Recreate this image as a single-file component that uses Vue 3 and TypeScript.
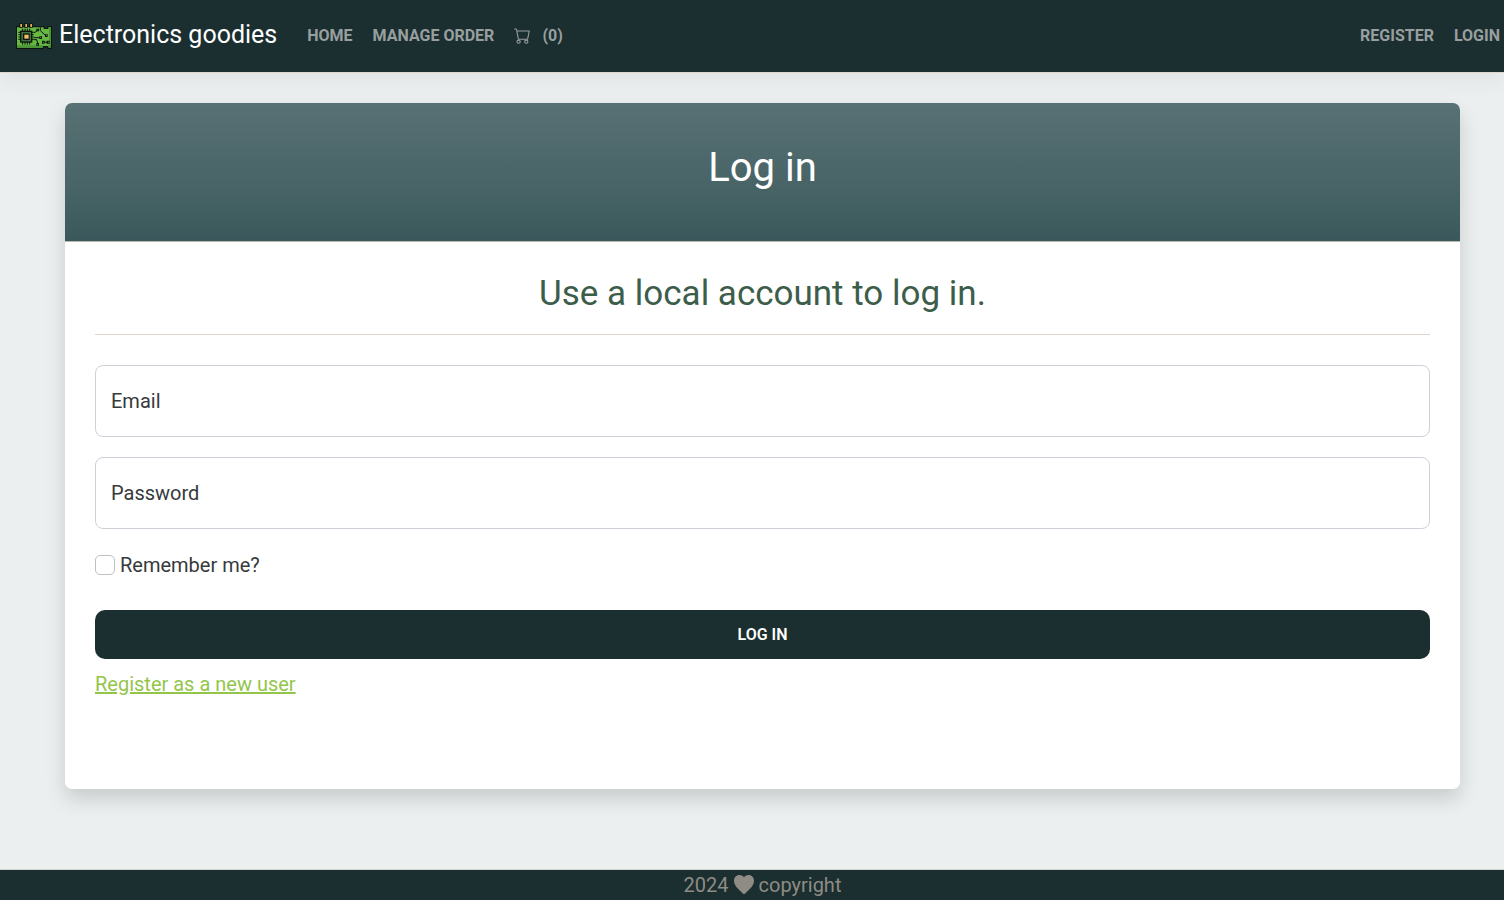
<script setup lang="ts">
import { ref } from 'vue'

const cartCount = ref(0)
const email = ref('')
const password = ref('')
const remember = ref(false)
</script>

<template>
  <div class="page">
    <header class="navbar">
      <a class="brand" href="#">
        <svg class="logo" viewBox="0 0 108 81" aria-hidden="true">
          <path d="M0 13H86V18H94V13H108V81H94V76H83V81H0Z" fill="#0a1510" />
          <path d="M3 16H83V21H97V16H105V76H97V72H80V77H3Z" fill="#67b843" />
          <path d="M3 70H80V77H3ZM97 70H105V77H97ZM99 16H105V70H99Z" fill="#4d963a" />
          <path d="M10 4H20V17H10ZM25 4H35V17H25ZM40 4H50V17H40Z" fill="#0a1510" />
          <path d="M13 6H18V15H13ZM28 6H33V15H28ZM43 6H48V15H43Z" fill="#e5ad55" />
          <path d="M20 20V68M27 20V68M34 20V68M41 20V68M7 31H53M7 38H53M7 45H53M7 52H53" fill="none" stroke="#0a1510" stroke-width="3" />
          <rect x="12" y="26" width="37" height="36" fill="#0a1510" />
          <rect x="16" y="30" width="29" height="28" fill="#3f733b" />
          <rect x="21" y="34" width="20" height="20" fill="#0a1510" />
          <rect x="25" y="38" width="13" height="12" fill="#f4bd63" />
          <path d="M53 31H57L65 25M53 47H71M53 53H62L65 63M73 16V26L88 40" fill="none" stroke="#0a1510" stroke-width="3" />
          <path d="M61 20H69V28H61ZM70 43H78V51H70ZM61 63H69V71H61ZM87 37H95V45H87ZM78 56H86V65H78ZM92 56H101V65H92Z" fill="#0a1510" />
          <path d="M84 59H94V62H84Z" fill="#0a1510" />
          <path d="M64 23H66V25H64ZM64 66H66V68H64ZM81 59H83V62H81ZM96 59H98V62H96Z" fill="#8bd05c" />
          <path d="M73 46H75V48H73ZM90 40H92V42H90Z" fill="#e9b65a" />
        </svg>
        <span>Electronics goodies</span>
      </a>
      <nav class="links" aria-label="Main">
        <a href="#">Home</a>
        <a href="#">Manage Order</a>
        <a class="cart" href="#" aria-label="Cart">
          <svg width="16" height="16" viewBox="0 0 16 16" fill="none" stroke="currentColor" stroke-width="1.1" stroke-linecap="round" stroke-linejoin="round" aria-hidden="true">
            <path d="M.6 1H2.4L4.4 11.2H13.6L15.3 3H2.9" />
            <circle cx="4.6" cy="13.7" r="1.6" />
            <circle cx="12.3" cy="13.7" r="1.6" />
          </svg>
          <span>({{ cartCount }})</span>
        </a>
      </nav>
      <nav class="links account" aria-label="Account">
        <a href="#">Register</a>
        <a href="#">Login</a>
      </nav>
    </header>

    <main class="content">
      <section class="card">
        <header class="card-header">
          <h1>Log in</h1>
        </header>
        <form class="card-body" @submit.prevent>
          <h2>Use a local account to log in.</h2>
          <hr />
          <div class="field">
            <input id="email" v-model="email" type="email" autocomplete="username" />
            <label v-show="!email" for="email">Email</label>
          </div>
          <div class="field">
            <input id="password" v-model="password" type="password" autocomplete="current-password" />
            <label v-show="!password" for="password">Password</label>
          </div>
          <div class="check">
            <input id="remember" v-model="remember" type="checkbox" />
            <label for="remember">Remember me?</label>
          </div>
          <button class="submit" type="submit">Log in</button>
          <a class="register" href="#">Register as a new user</a>
        </form>
      </section>
    </main>

    <footer class="footer">
      <span>2024</span>
      <svg width="20" height="20" viewBox="0 0 20 20" fill="currentColor" aria-hidden="true">
        <path d="M10 2.3C11.2.8 12.9 0 14.6 0 17.7 0 20 2.4 20 5.7 20 8.5 18.6 11.2 16.2 13.6L10.9 18.8Q10 19.6 9.1 18.8L3.8 13.6C1.4 11.2 0 8.5 0 5.7 0 2.4 2.3 0 5.4 0 7.1 0 8.8.8 10 2.3Z" />
      </svg>
      <span>copyright</span>
    </footer>
  </div>
</template>

<style>
body {
  margin: 0;
  background: #ebefef;
}
</style>

<style scoped>
.page {
  display: flex;
  flex-direction: column;
  min-height: 100vh;
  font-family: Roboto, "Liberation Sans", sans-serif;
  font-size: 20px;
  line-height: 30px;
  color: #373a3c;
}

.page *,
.page *::before {
  box-sizing: border-box;
}

.navbar {
  display: flex;
  align-items: center;
  padding: 15px 4px 16px 16px;
  border-bottom: 1px solid #e0d8cc;
  background: #1b2e30;
  box-shadow: 0 8px 20px rgba(0, 0, 0, 0.05);
}

.brand {
  display: flex;
  align-items: center;
  gap: 7px;
  margin-right: 30px;
  color: #fff;
  font-size: 25px;
  line-height: 40px;
  padding-bottom: 1px;
  text-decoration: none;
  white-space: nowrap;
}

.logo {
  width: 36px;
  height: 27px;
}

.links {
  display: flex;
  align-items: center;
  gap: 20px;
}

.links a {
  color: #989f9f;
  font-size: 16px;
  font-weight: 700;
  line-height: 24px;
  text-transform: uppercase;
  text-decoration: none;
  white-space: nowrap;
}

.links .cart {
  display: flex;
  align-items: center;
  gap: 12px;
}

.account {
  margin-left: auto;
}

.content {
  flex: 1;
  padding: 30px 44px 80px 65px;
}

.card {
  border-radius: 7px;
  background: #fff;
  box-shadow: 0 10px 20px rgba(0, 0, 0, 0.15);
}

.card-header {
  padding: 40px 30px 48px;
  border-bottom: 1px solid #b5b8ad;
  border-radius: 7px 7px 0 0;
  background: linear-gradient(180deg, #587174, #486466 60%, #3a585b);
  color: #fff;
  text-align: center;
}

h1 {
  margin: 0;
  font-size: 40px;
  font-weight: 400;
  line-height: 50px;
}

.card-body {
  display: flex;
  flex-direction: column;
  padding: 30px 30px 90px;
}

h2 {
  margin: 0;
  color: #3d5d4b;
  font-size: 35px;
  font-weight: 400;
  line-height: 44px;
  text-align: center;
}

hr {
  width: 100%;
  margin: 18px 0 30px;
  border: 0;
  border-top: 1px solid #dfd7ce;
}

.field {
  display: grid;
  margin-bottom: 20px;
}

.field input,
.field label {
  grid-area: 1 / 1;
}

.field input {
  width: 100%;
  height: 72px;
  padding: 20px 15px;
  border: 1px solid #ced1d8;
  border-radius: 8px;
  background: #fff;
  color: inherit;
  font: inherit;
}

.field label {
  align-self: center;
  justify-self: start;
  margin-left: 16px;
}

.check {
  display: flex;
  align-items: center;
  gap: 5px;
  margin-bottom: 29px;
  line-height: 32px;
}

.check input {
  appearance: none;
  width: 20px;
  height: 20px;
  margin: 0;
  border: 1px solid #bfbfbf;
  border-radius: 5px;
  background: #fff;
}

.check input:checked {
  background: #1b2e30;
}

.submit {
  padding: 12px 30px;
  border: 0;
  border-radius: 10px;
  background: #1b2e30;
  color: #fff;
  font-family: inherit;
  font-size: 16px;
  font-weight: 600;
  line-height: 25px;
  text-transform: uppercase;
  cursor: pointer;
}

.register {
  align-self: flex-start;
  margin-top: 10px;
  color: #93c54b;
}

.footer {
  display: flex;
  align-items: center;
  justify-content: center;
  gap: 5px;
  padding-left: 21px;
  border-top: 1px solid #d5d5cf;
  background: #1b2e30;
  color: #8e8c84;
}
</style>
